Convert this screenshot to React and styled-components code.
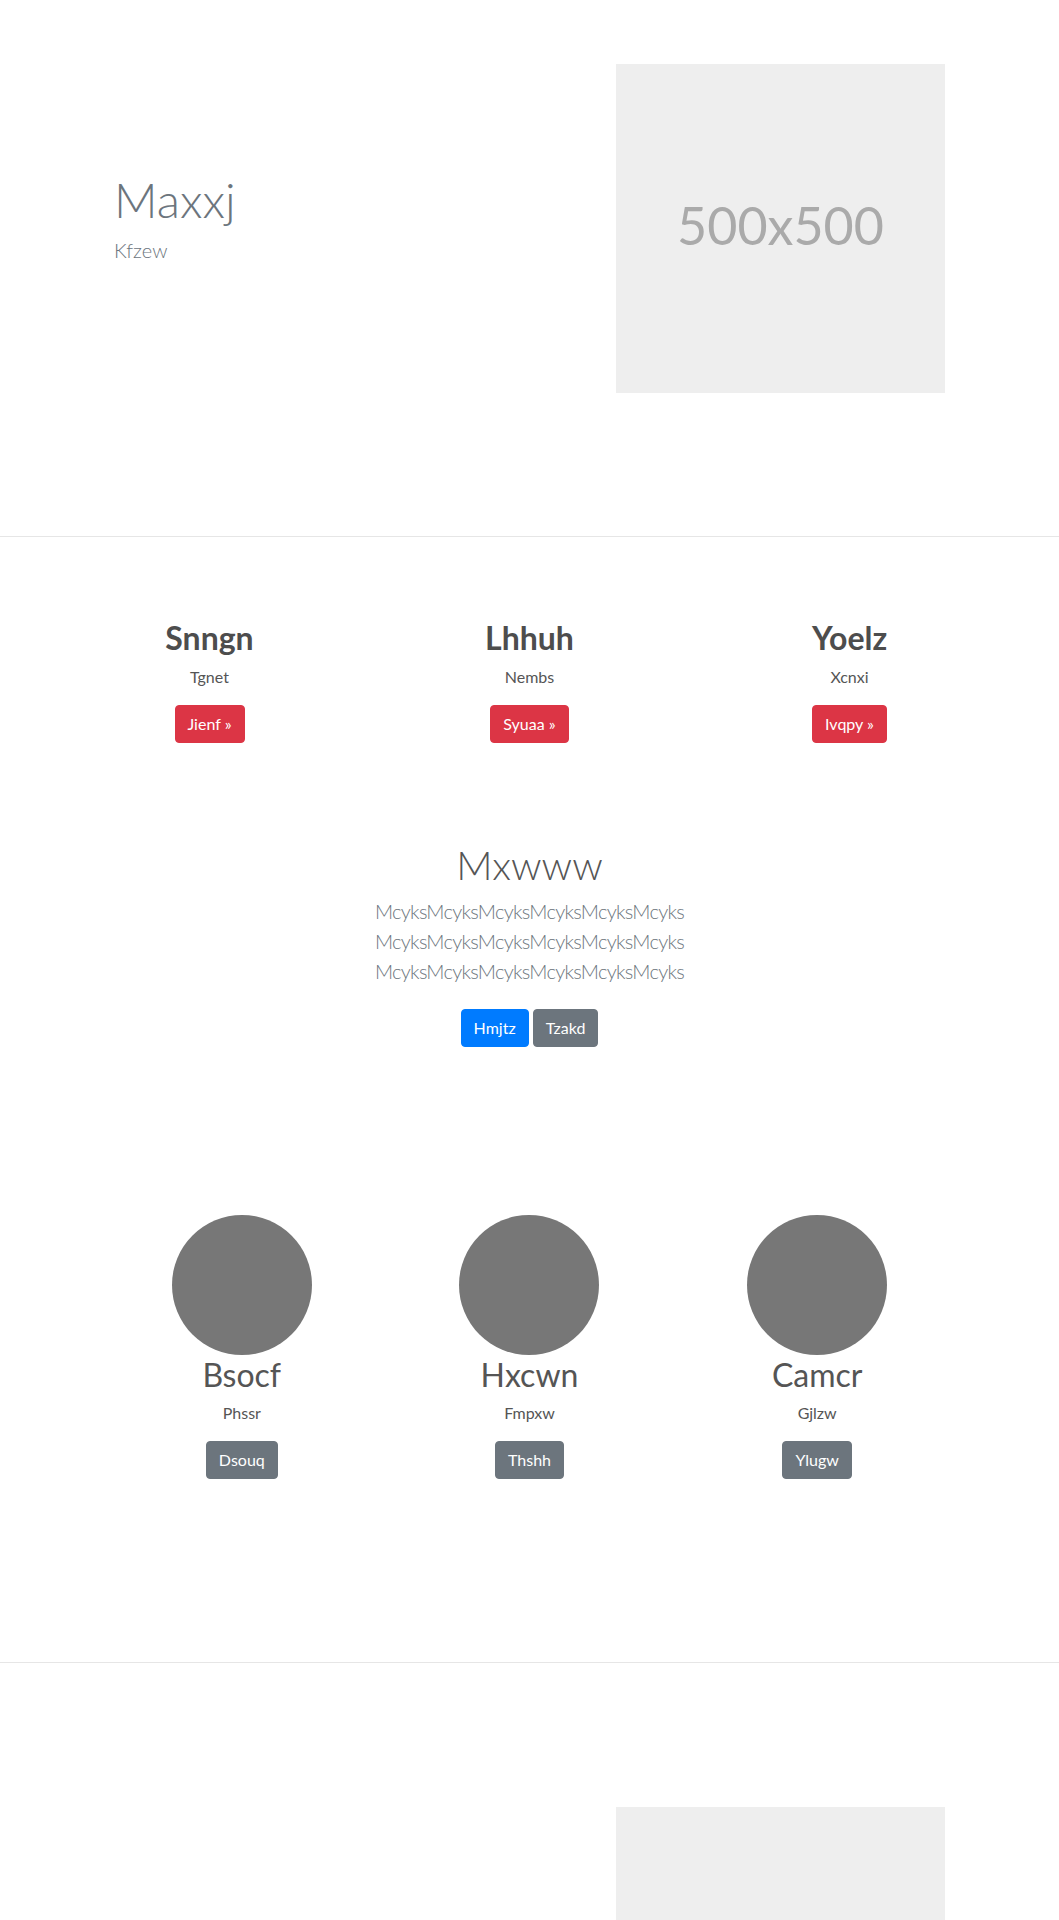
import React from 'react';
import styled, { createGlobalStyle } from 'styled-components';

const GlobalStyle = createGlobalStyle`
  * {
    box-sizing: border-box;
  }
  body {
    margin: 0;
    background: #fff;
    color: #555;
    font-family: Lato, "Open Sans", "Liberation Sans", sans-serif;
  }
`;

const Page = styled.div`
  width: 1059px;
  overflow: hidden;
`;

const Hero = styled.section`
  display: flex;
  justify-content: space-between;
  align-items: flex-start;
  padding: ${(p) => p.$top}px 114px ${(p) => p.$bottom}px;
  border-bottom: ${(p) => (p.$divider ? '1px solid #e6e6e6' : 'none')};
`;

const HeroText = styled.div`
  margin-top: 107px;
`;

const HeroTitle = styled.h1`
  margin: 0 0 6px;
  font-size: 48px;
  font-weight: 300;
  line-height: 1.2;
  color: #6c757d;
`;

const HeroSub = styled.p`
  margin: 0;
  font-size: 20px;
  font-weight: 300;
  line-height: 1.5;
  color: #6c757d;
`;

const Placeholder = styled.div`
  width: 329px;
  height: 329px;
  flex: none;
  display: flex;
  align-items: center;
  justify-content: center;
  padding-bottom: 8px;
  background: #eeeeee;
  color: #aaaaaa;
  font-size: 52px;
  font-weight: 400;
`;

const Features = styled.section`
  width: 960px;
  margin: 0 auto;
  padding-top: 82px;
  display: grid;
  grid-template-columns: repeat(3, 1fr);
`;

const Feature = styled.div`
  text-align: center;
  padding: 0 15px;
`;

const FeatureTitle = styled.h2`
  margin: 0 0 8px;
  font-size: 32px;
  font-weight: 700;
  line-height: 1.2;
  color: #4d4d4d;
`;

const Text = styled.p`
  margin: 0 0 16px;
  font-size: 16px;
  line-height: 1.5;
  color: #555;
`;

const Button = styled.a`
  display: inline-block;
  padding: 6px 12px;
  border: 1px solid ${(p) => p.$bg};
  border-radius: 4px;
  background: ${(p) => p.$bg};
  color: #fff;
  font-size: 16px;
  line-height: 1.5;
  text-decoration: none;
  cursor: pointer;
`;

const Intro = styled.section`
  padding-top: 98px;
  text-align: center;
`;

const IntroTitle = styled.h1`
  margin: 0 0 7px;
  font-size: 40px;
  font-weight: 300;
  line-height: 1.2;
  color: #555;
`;

const Lead = styled.p`
  margin: 0 0 23px;
  font-size: 20px;
  font-weight: 300;
  line-height: 1.5;
  letter-spacing: -0.7px;
  color: #6c757d;
`;

const ButtonRow = styled.div`
  display: flex;
  justify-content: center;
  gap: 4px;
`;

const TeamWrap = styled.section`
  border-bottom: 1px solid #e6e6e6;
`;

const Team = styled.div`
  width: 863px;
  margin: 0 auto;
  padding: 168px 0 183px;
  display: grid;
  grid-template-columns: repeat(3, 1fr);
`;

const Member = styled.div`
  display: flex;
  flex-direction: column;
  align-items: center;
  text-align: center;
`;

const Avatar = styled.div`
  width: 140px;
  height: 140px;
  border-radius: 50%;
  background: #777777;
`;

const MemberName = styled.h2`
  margin: 1px 0 6px;
  font-size: 32px;
  font-weight: 400;
  line-height: 1.2;
  color: #555;
`;

const features = [
  { title: 'Snngn', text: 'Tgnet', cta: 'Jienf' },
  { title: 'Lhhuh', text: 'Nembs', cta: 'Syuaa' },
  { title: 'Yoelz', text: 'Xcnxi', cta: 'Ivqpy' },
];

const members = [
  { name: 'Bsocf', role: 'Phssr', cta: 'Dsouq' },
  { name: 'Hxcwn', role: 'Fmpxw', cta: 'Thshh' },
  { name: 'Camcr', role: 'Gjlzw', cta: 'Ylugw' },
];

const line = 'Mcyks'.repeat(6);

export default function App() {
  return (
    <Page>
      <GlobalStyle />
      <Hero $top={64} $bottom={143} $divider>
        <HeroText>
          <HeroTitle>Maxxj</HeroTitle>
          <HeroSub>Kfzew</HeroSub>
        </HeroText>
        <Placeholder>500x500</Placeholder>
      </Hero>

      <Features>
        {features.map((f) => (
          <Feature key={f.title}>
            <FeatureTitle>{f.title}</FeatureTitle>
            <Text>{f.text}</Text>
            <Button $bg="#dc3545">{f.cta} »</Button>
          </Feature>
        ))}
      </Features>

      <Intro>
        <IntroTitle>Mxwww</IntroTitle>
        <Lead>
          {line}
          <br />
          {line}
          <br />
          {line}
        </Lead>
        <ButtonRow>
          <Button $bg="#007bff">Hmjtz</Button>
          <Button $bg="#6c757d">Tzakd</Button>
        </ButtonRow>
      </Intro>

      <TeamWrap>
        <Team>
          {members.map((m) => (
            <Member key={m.name}>
              <Avatar />
              <MemberName>{m.name}</MemberName>
              <Text>{m.role}</Text>
              <Button $bg="#6c757d">{m.cta}</Button>
            </Member>
          ))}
        </Team>
      </TeamWrap>

      <Hero $top={144} $bottom={143}>
        <HeroText />
        <Placeholder>500x500</Placeholder>
      </Hero>
    </Page>
  );
}
